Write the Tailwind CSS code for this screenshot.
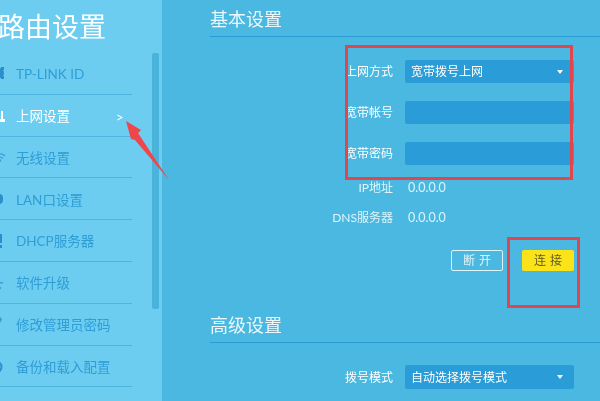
<!DOCTYPE html>
<html lang="zh-CN">
<head>
    <meta charset="UTF-8">
    <title>路由设置</title>
    <script src="https://cdn.jsdelivr.net/npm/@tailwindcss/browser@4"></script>
</head>
<body class="bg-[#4ab8e0] overflow-hidden">
    <div class="relative flex w-[600px] h-[401px] overflow-hidden bg-[#4ab8e0] text-[12px] text-white blur-[0.4px] font-['Lato','Noto_Sans_CJK_SC',sans-serif]">
        <!-- Sidebar -->
        <aside class="relative w-[162px] h-full shrink-0 bg-[#6dcdf0]">
            <h1 class="h-[53px] pt-[8px] -ml-[2px] text-[27px] leading-[38px] whitespace-nowrap">路由设置</h1>
            <nav class="w-[132px] text-[13.5px] text-[#2f9dd6]">
                <div class="flex items-center relative h-[41.8px] pl-[16px] pt-[2px] border-b border-[#4fb5de]">
                    <svg class="absolute left-[-8px] top-[13px] w-[14px] h-[14px]" viewBox="0 0 14 14" fill="#2a8fca"><circle cx="7" cy="7" r="5"/><rect x="9" y="1" width="3" height="3"/><rect x="9" y="10" width="3" height="3"/></svg>
                    TP-LINK ID
                </div>
                <div class="flex items-center relative h-[41.8px] pl-[16px] pt-[2px] border-b border-[#4fb5de] text-white">
                    <svg class="absolute left-[-6px] top-[14px] w-[12px] h-[14px]" viewBox="0 0 12 14" fill="#fff"><rect x="7" y="2" width="2" height="8"/><rect x="0" y="10" width="11" height="3"/></svg>
                    上网设置
                    <span class="absolute left-[116px] top-[14px] text-[13px] leading-[16px] text-white">&gt;</span>
                </div>
                <div class="flex items-center relative h-[41.8px] pl-[16px] pt-[2px] border-b border-[#4fb5de]">
                    <svg class="absolute left-[-6px] top-[15px] w-[12px] h-[10px]" viewBox="0 0 12 10" fill="none" stroke="#3a9fd6" stroke-width="1.2"><path d="M1 4a7 7 0 0 1 10 0M3 6.5a4 4 0 0 1 6 0"/><circle cx="6" cy="8.5" r="0.6" fill="#3a9fd6"/></svg>
                    无线设置
                </div>
                <div class="flex items-center relative h-[41.8px] pl-[16px] pt-[2px] border-b border-[#4fb5de]">
                    <svg class="absolute left-[-8px] top-[15px] w-[12px] h-[12px]" viewBox="0 0 12 12" fill="#2a8fca"><rect x="1" y="1" width="10" height="10" rx="4"/></svg>
                    LAN口设置
                </div>
                <div class="flex items-center relative h-[41.8px] pl-[16px] pt-[2px] border-b border-[#4fb5de]">
                    <svg class="absolute left-[-6px] top-[13px] w-[10px] h-[16px]" viewBox="0 0 10 16" fill="#2a8fca"><rect x="5" y="1" width="3" height="9"/><rect x="5" y="12" width="3" height="3"/><rect x="0" y="3" width="4" height="10"/></svg>
                    DHCP服务器
                </div>
                <div class="flex items-center relative h-[41.8px] pl-[16px] pt-[2px] border-b border-[#4fb5de]">
                    <svg class="absolute left-[-6px] top-[13px] w-[10px] h-[16px]" viewBox="0 0 10 16" fill="#3a9fd6"><rect x="2" y="3" width="3" height="2"/><rect x="0" y="7" width="9" height="1.5"/><rect x="3" y="12" width="4" height="2"/></svg>
                    软件升级
                </div>
                <div class="flex items-center relative h-[41.8px] pl-[16px] pt-[2px] border-b border-[#4fb5de]">
                    <svg class="absolute left-[-6px] top-[11px] w-[10px] h-[12px]" viewBox="0 0 10 12" fill="#2f9dd6"><path d="M0 2l5-1 3 3-2 4-3-3z"/></svg>
                    修改管理员密码
                </div>
                <div class="flex items-center relative h-[41.8px] pl-[16px] pt-[2px] border-b border-[#4fb5de]">
                    <svg class="absolute left-[-9px] top-[13px] w-[12px] h-[16px]" viewBox="0 0 12 16" fill="none" stroke="#2a8fca" stroke-width="2"><circle cx="5" cy="8" r="5.5"/></svg>
                    备份和载入配置
                </div>
            </nav>
            <!-- scrollbar -->
            <div class="absolute left-[152px] top-[53px] w-[7px] h-[256px] rounded-[2px] bg-[#4ab3dc]"></div>
        </aside>

        <!-- Main -->
        <main class="flex-1 pl-[48px]">
            <h2 class="h-[37px] text-[18px] leading-[38px] border-b border-[#2a9bd2] text-[#eaf8fd]">基本设置</h2>

            <div class="flex items-center gap-[12px] mt-[23px] h-[23px]">
                <label class="w-[183px] shrink-0 pt-[1px] text-right">上网方式</label>
                <div class="flex items-center justify-between w-[169px] h-[23px] pl-[6px] pr-[11px] bg-[#2a9dd8] rounded-[2px]">
                    <span class="pt-[1px]">宽带拨号上网</span>
                    <span class="w-0 h-0 border-x-[3px] border-x-transparent border-t-[4px] border-t-white"></span>
                </div>
            </div>
            <div class="flex items-center gap-[12px] mt-[18px] h-[23px]">
                <label class="w-[183px] shrink-0 pt-[1px] text-right">宽带帐号</label>
                <div class="w-[169px] h-[23px] bg-[#2a9dd8] rounded-[2px]"></div>
            </div>
            <div class="flex items-center gap-[12px] mt-[18px] h-[23px]">
                <label class="w-[183px] shrink-0 pt-[1px] text-right">宽带密码</label>
                <div class="w-[169px] h-[23px] bg-[#2a9dd8] rounded-[2px]"></div>
            </div>
            <div class="flex items-center gap-[15px] mt-[11px] h-[23px] text-[#dff4fb]">
                <label class="w-[183px] shrink-0 pt-[1px] text-right">IP地址</label>
                <span class="pt-[1px] text-[12.5px]">0.0.0.0</span>
            </div>
            <div class="flex items-center gap-[15px] mt-[7px] h-[23px] text-[#dff4fb]">
                <label class="w-[183px] shrink-0 pt-[1px] text-right">DNS服务器</label>
                <span class="pt-[1px] text-[12.5px]">0.0.0.0</span>
            </div>

            <div class="flex mt-[21px] ml-[241px] gap-[19px]">
                <button class="w-[52px] h-[21px] pl-[4px] border border-[#dff4fb] rounded-[2px] text-[12px] leading-[19px] tracking-[4px] text-[#dff4fb]">断开</button>
                <button class="w-[52px] h-[21px] pl-[4px] bg-[#fbe319] rounded-[2px] text-[12px] leading-[21px] tracking-[4px] text-[#5b5a2a]">连接</button>
            </div>

            <h2 class="h-[37px] mt-[35px] text-[18px] leading-[38px] border-b border-[#2a9bd2] text-[#eaf8fd]">高级设置</h2>

            <div class="flex items-center gap-[12px] mt-[22px] h-[24px]">
                <label class="w-[183px] shrink-0 pt-[1px] text-right">拨号模式</label>
                <div class="flex items-center justify-between w-[169px] h-[24px] pl-[6px] pr-[11px] bg-[#2a9dd8] rounded-[2px]">
                    <span class="pt-[1px]">自动选择拨号模式</span>
                    <span class="w-0 h-0 border-x-[3px] border-x-transparent border-t-[4px] border-t-white"></span>
                </div>
            </div>
        </main>

        <!-- red annotations on top of the screenshot -->
        <div class="absolute left-[345px] top-[45px] w-[228px] h-[135px] border-[3px] border-[#e0474c]"></div>
        <div class="absolute left-[507px] top-[237px] w-[73px] h-[71px] border-[3px] border-[#e0474c]"></div>
        <svg class="absolute left-[120px] top-[115px] w-[55px] h-[70px]" viewBox="0 0 55 70" fill="#f0454a"><path d="M6 6L21 15 18 18 49 65 15 25 11 24z"/></svg>
    </div>
</body>
</html>
